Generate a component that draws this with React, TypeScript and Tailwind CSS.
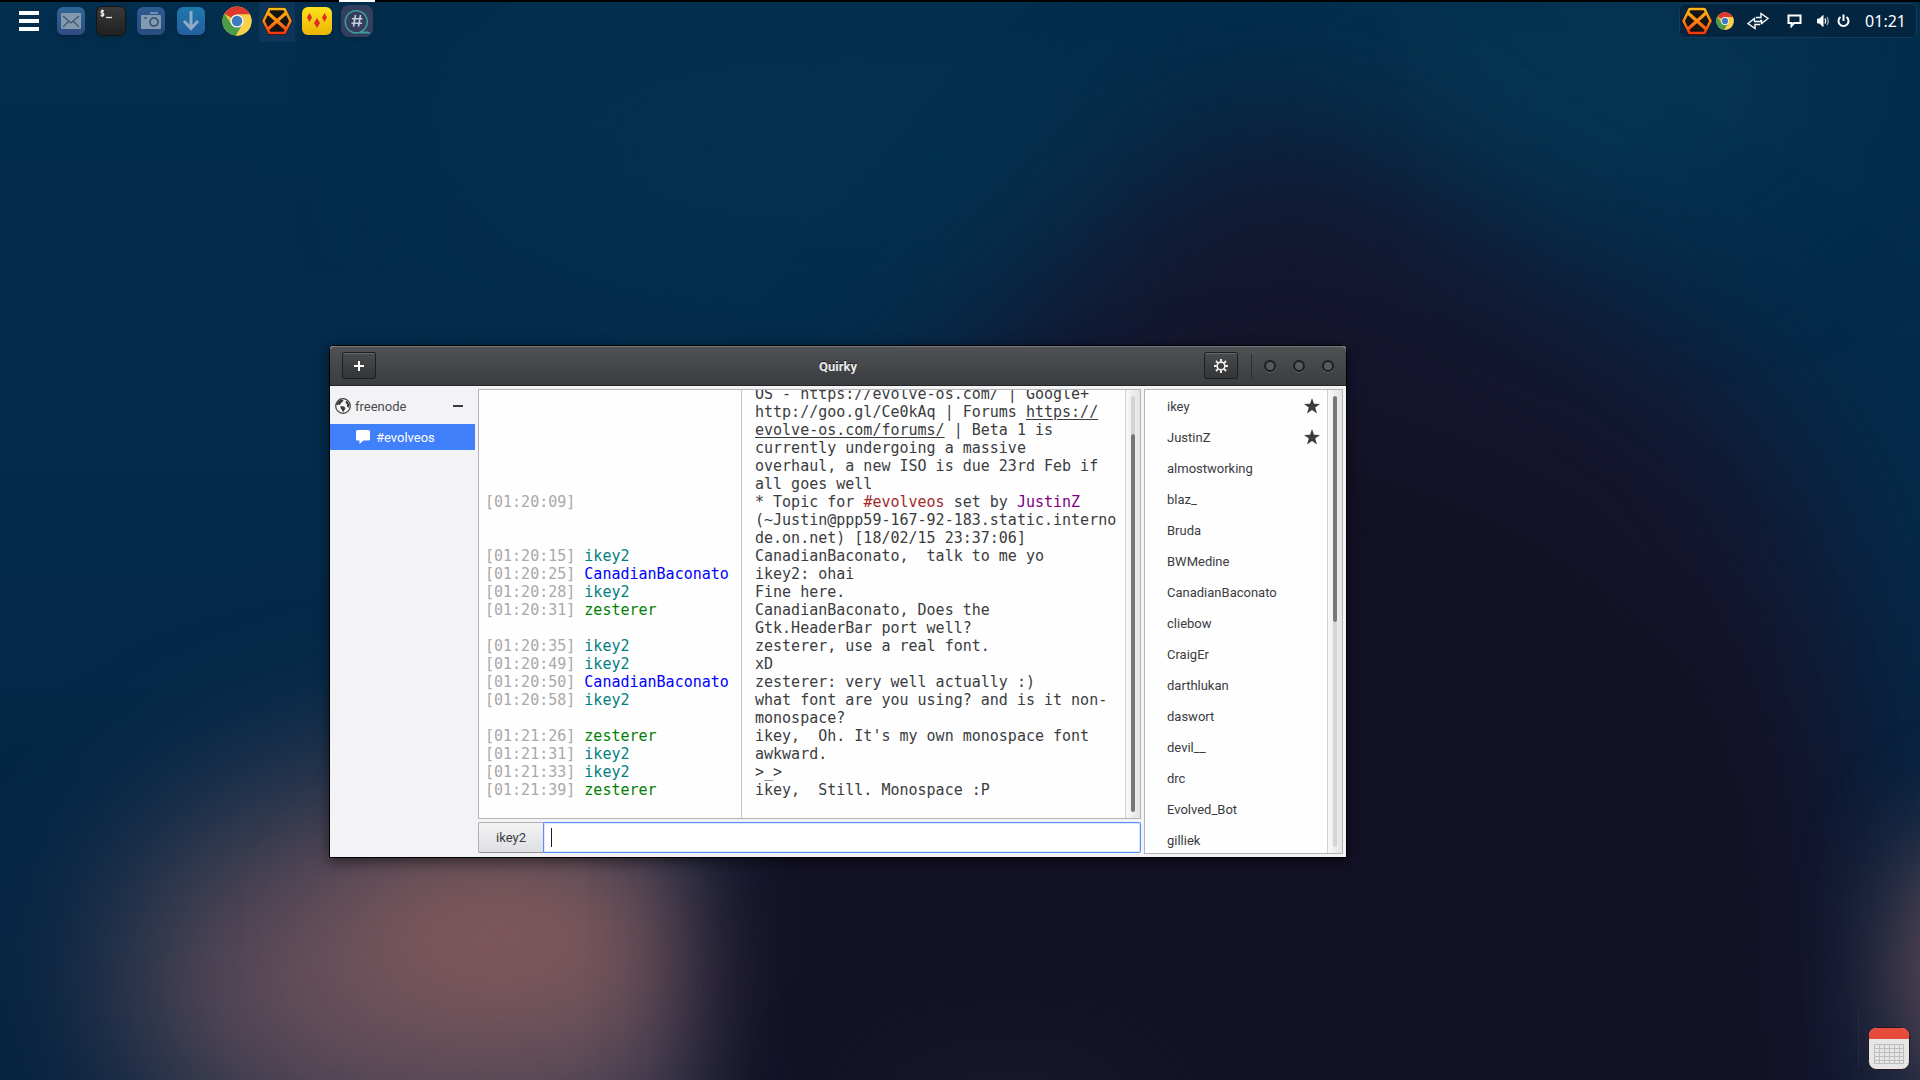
import { Fragment } from 'react';
import type { ReactNode } from 'react';

type Message = {
  time?: string;
  nick?: string;
  color?: string;
  lines: ReactNode[];
};

const messages: Message[] = [
  {
    lines: [
      'OS - https://evolve-os.com/ | Google+',
      <>http://goo.gl/Ce0kAq | Forums <a href="#forums" className="underline underline-offset-2">https://</a></>,
      <><a href="#forums" className="underline underline-offset-2">evolve-os.com/forums/</a> | Beta 1 is</>,
      'currently undergoing a massive',
      'overhaul, a new ISO is due 23rd Feb if',
      'all goes well',
    ],
  },
  {
    time: '01:20:09',
    lines: [
      <>* Topic for <span className="text-[#a52a2a]">#evolveos</span> set by <span className="text-[#800080]">JustinZ</span></>,
      '(~Justin@ppp59-167-92-183.static.interno',
      'de.on.net) [18/02/15 23:37:06]',
    ],
  },
  { time: '01:20:15', nick: 'ikey2', color: 'text-[#008080]', lines: ['CanadianBaconato,  talk to me yo'] },
  { time: '01:20:25', nick: 'CanadianBaconato', color: 'text-[#0000ff]', lines: ['ikey2: ohai'] },
  { time: '01:20:28', nick: 'ikey2', color: 'text-[#008080]', lines: ['Fine here.'] },
  {
    time: '01:20:31',
    nick: 'zesterer',
    color: 'text-[#008000]',
    lines: ['CanadianBaconato, Does the', 'Gtk.HeaderBar port well?'],
  },
  { time: '01:20:35', nick: 'ikey2', color: 'text-[#008080]', lines: ['zesterer, use a real font.'] },
  { time: '01:20:49', nick: 'ikey2', color: 'text-[#008080]', lines: ['xD'] },
  { time: '01:20:50', nick: 'CanadianBaconato', color: 'text-[#0000ff]', lines: ['zesterer: very well actually :)'] },
  {
    time: '01:20:58',
    nick: 'ikey2',
    color: 'text-[#008080]',
    lines: ['what font are you using? and is it non-', 'monospace?'],
  },
  {
    time: '01:21:26',
    nick: 'zesterer',
    color: 'text-[#008000]',
    lines: ["ikey,  Oh. It's my own monospace font"],
  },
  { time: '01:21:31', nick: 'ikey2', color: 'text-[#008080]', lines: ['awkward.'] },
  { time: '01:21:33', nick: 'ikey2', color: 'text-[#008080]', lines: ['>_>'] },
  { time: '01:21:39', nick: 'zesterer', color: 'text-[#008000]', lines: ['ikey,  Still. Monospace :P'] },
];

const users = [
  { name: 'ikey', op: true },
  { name: 'JustinZ', op: true },
  { name: 'almostworking' },
  { name: 'blaz_' },
  { name: 'Bruda' },
  { name: 'BWMedine' },
  { name: 'CanadianBaconato' },
  { name: 'cliebow' },
  { name: 'CraigEr' },
  { name: 'darthlukan' },
  { name: 'daswort' },
  { name: 'devil__' },
  { name: 'drc' },
  { name: 'Evolved_Bot' },
  { name: 'gilliek' },
];

const Wallpaper = () => (
  <svg className="absolute inset-0 w-full h-full" viewBox="0 0 1920 1080" preserveAspectRatio="none" aria-hidden="true">
    <defs>
      <linearGradient id="sky" x1="0" y1="0" x2="0" y2="1">
        <stop offset="0" stopColor="#032e4d" />
        <stop offset="0.5" stopColor="#042a4a" />
        <stop offset="1" stopColor="#05223f" />
      </linearGradient>
      <filter id="soft" x="-60%" y="-100%" width="220%" height="300%" colorInterpolationFilters="sRGB">
        <feGaussianBlur stdDeviation="85" />
      </filter>
      <filter id="mid" x="-60%" y="-80%" width="220%" height="260%" colorInterpolationFilters="sRGB">
        <feGaussianBlur stdDeviation="55" />
      </filter>
    </defs>
    <rect width="1920" height="1080" fill="url(#sky)" />
    <ellipse cx="1560" cy="90" rx="260" ry="110" fill="#053753" filter="url(#soft)" />
    <ellipse cx="850" cy="150" rx="380" ry="120" fill="#04324f" filter="url(#soft)" />
    <ellipse cx="460" cy="980" rx="330" ry="200" fill="#664f5a" filter="url(#soft)" />
    <ellipse cx="500" cy="935" rx="150" ry="75" fill="#80595b" filter="url(#mid)" />
    <path d="M820 1350 C800 1000 760 760 830 600 C900 450 1030 320 1110 225 C1180 130 1340 90 1430 190 C1520 290 1640 290 1740 400 C1840 520 1880 700 1880 1350 Z" fill="#15152d" filter="url(#soft)" />
    <path d="M715 1250 C715 1000 700 800 780 650 C900 480 1180 400 1300 420 C1480 450 1700 560 1760 720 C1810 850 1800 1000 1800 1250 Z" fill="#131125" filter="url(#mid)" />
    <ellipse cx="1010" cy="1110" rx="150" ry="50" fill="#1a1b30" filter="url(#mid)" />
    <ellipse cx="1990" cy="970" rx="85" ry="140" fill="#76545c" filter="url(#mid)" />
  </svg>
);

const Chrome = ({ size }: { size: number }) => (
  <svg width={size} height={size} viewBox="0 0 30 30" aria-hidden="true">
    <circle cx="15" cy="15" r="14.6" fill="#f6c933" />
    <path d="M15 15 L2.4 7.7 A14.6 14.6 0 0 1 27.6 7.7 L28 8.6 L15 8.6 Z" fill="#dc3a31" />
    <path d="M2.4 7.7 A14.6 14.6 0 0 0 14 29.6 L20.6 18.4 L15 15 L9.5 18.3 Z" fill="#4a9c4b" />
    <path d="M28 8.6 A14.6 14.6 0 0 1 14 29.6 L20.6 18.3 L21 12 L15 8.6 Z" fill="#f8d04a" />
    <circle cx="15" cy="15" r="6.6" fill="#f2f2f2" />
    <circle cx="15" cy="15" r="5.2" fill="#3b7ac0" />
  </svg>
);

const Hexchat = () => (
  <svg width="32" height="30" viewBox="0 0 32 30" aria-hidden="true">
    <defs>
      <linearGradient id="hex" gradientUnits="userSpaceOnUse" x1="0" y1="2" x2="0" y2="28">
        <stop offset="0" stopColor="#fcb913" />
        <stop offset="0.5" stopColor="#fb8712" />
        <stop offset="1" stopColor="#f8330c" />
      </linearGradient>
    </defs>
    <path d="M8.500 2 H23.500 L30.500 15 L23.500 28 H8.500 L1.500 15 Z" fill="#141414" stroke="#101010" strokeWidth="2" strokeLinejoin="round" />
    <g fill="none" stroke="url(#hex)" strokeLinejoin="round">
      <path d="M8.500 3 H23.500 L29.500 15 L23.500 27 H8.500 L2.500 15 Z" strokeWidth="2.600" />
      <path d="M7 7 L25 23 M25 7 L7 23" strokeWidth="3.200" />
    </g>
  </svg>
);

const slot = 'w-9 h-10 pb-[2px] flex items-center justify-center';

const Panel = () => (
  <header className="relative flex items-start justify-between border-t-2 border-black">
    <nav className="flex pl-[11px]" aria-label="Launchers">
      <button className={`${slot} mr-[6px]`} aria-label="Menu">
        <svg width="20" height="20" viewBox="0 0 20 20" fill="#fff">
          <path d="M0 0h20v4H0zM0 8h20v4H0zM0 16h20v4H0z" />
        </svg>
      </button>
      <div className="flex gap-1 mr-[10px]">
        <button className={slot} aria-label="Mail">
          <span className="w-7 h-7 rounded-md bg-linear-to-b from-[#2d6796] to-[#304a82] shadow-md flex items-center justify-center">
            <svg width="20" height="16" viewBox="0 0 20 16">
              <rect width="20" height="16" rx="1" fill="#8599ad" />
              <path d="M2 3 L10 10 L18 3 M2 14 L7.500 8.500 M18 14 L12.500 8.500" fill="none" stroke="#395678" strokeWidth="1.300" />
            </svg>
          </span>
        </button>
        <button className={slot} aria-label="Terminal">
          <span className="w-[30px] h-[30px] rounded-md bg-linear-to-b from-[#3a3a3a] to-[#202020] border border-[#151515] shadow-md">
            <svg width="28" height="28" viewBox="0 0 28 28" fill="none" stroke="#e8e8e8">
              <path d="M7 4 H4.500 Q3.500 5.500 5 6 Q7.500 6.500 6.500 8.500 H3.500 M5.300 2.500 V10" strokeWidth="1.300" />
              <path d="M9 10.500 H15" strokeWidth="1.300" />
            </svg>
          </span>
        </button>
        <button className={slot} aria-label="Screenshot">
          <span className="w-7 h-7 rounded-md bg-linear-to-b from-[#2c5b92] to-[#294b80] shadow-md flex items-center justify-center">
            <svg width="20" height="18" viewBox="0 0 20 18">
              <path d="M9 1 H17" stroke="#8da0b5" strokeWidth="1.500" />
              <rect y="3" width="20" height="14" rx="1" fill="#8599ad" />
              <path d="M3 6 H6" stroke="#284c7d" strokeWidth="1.300" />
              <circle cx="13" cy="10" r="4" fill="none" stroke="#284c7d" strokeWidth="1.600" />
            </svg>
          </span>
        </button>
        <button className={slot} aria-label="Downloads">
          <span className="w-7 h-7 rounded-md bg-linear-to-b from-[#1c79ab] to-[#245e9f] shadow-md flex items-center justify-center">
            <svg width="18" height="22" viewBox="0 0 18 22" fill="none" stroke="#8fabc6" strokeWidth="3">
              <path d="M9 1 V19 M2 11 L9 18.500 L16 11" />
            </svg>
          </span>
        </button>
      </div>
      <div className="flex gap-1">
        <button className={slot} aria-label="Chrome"><Chrome size={30} /></button>
        <button className={`${slot} bg-[#0e355a]`} aria-label="HexChat"><Hexchat /></button>
        <button className={slot} aria-label="Games">
          <span className="w-[30px] h-7 rounded-md bg-linear-to-b from-[#fde21c] to-[#edb403] shadow-md flex items-center justify-center">
            <svg width="22" height="16" viewBox="0 0 22 16" fill="#dc3121">
              <path d="M3.500 0 L6 4.500 L3.500 9 L1 4.500Z M18.500 0 L21 4.500 L18.500 9 L16 4.500Z M11 5 L14 10 L11 15 L8 10Z" />
            </svg>
          </span>
        </button>
        <button className={`${slot} relative`} aria-label="Quirky">
          <span className="absolute -top-[2px] inset-x-0 h-[2px] bg-white" />
          <span className="w-8 h-8 rounded-lg bg-[#343f60] shadow-md flex items-center justify-center">
            <svg width="26" height="26" viewBox="0 0 26 26" fill="none">
              <path d="M26 24.800 H13 A11 11 0 1 1 21 20.500 Q19 23 16 24.300 H24" stroke="#3f9997" strokeWidth="1.600" />
              <path d="M11.500 7 L9.500 18.500 M16.500 7 L14.500 18.500 M8 10.800 H18.500 M7.500 15.300 H18" stroke="#c6ccd6" strokeWidth="1.600" />
            </svg>
          </span>
        </button>
      </div>
    </nav>
    <div className="flex items-center h-[35px] mt-px mr-[3px] pl-[1px] pr-[10px] rounded-md border border-[#133b5a] bg-[#04253f] text-white">
      <Hexchat />
      <span className="ml-[3px]"><Chrome size={18} /></span>
      <svg className="ml-[13px]" width="22" height="18" viewBox="0 0 22 18" fill="none" stroke="#fff" strokeWidth="1.400">
        <path d="M9 5.500 H14 V1.500 L21 6.500 L14.500 11.500 V8.500 H13 M13 12.500 H8 V16.500 L1 11.500 L7.500 6.500 V9.500 H14.500" />
      </svg>
      <svg className="ml-[18px]" width="15" height="14" viewBox="0 0 15 14" fill="none" stroke="#fff" strokeWidth="2">
        <path d="M1.500 1.500 H13.500 V9 H7 L4.500 12 V9 H1.500 Z" />
      </svg>
      <svg className="ml-[15px]" width="14" height="14" viewBox="0 0 14 14" fill="none" stroke="#fff">
        <path d="M0.500 5 H2.500 L6 1.500 V12.500 L2.500 9 H0.500Z" fill="#fff" />
        <path d="M8 4.500 Q9.500 7 8 9.500" strokeWidth="1.400" />
        <path d="M10 3 Q12.500 7 10 11" stroke="#a8b5c1" strokeWidth="1.200" />
      </svg>
      <svg className="ml-[6px]" width="13" height="14" viewBox="0 0 13 14" fill="none" stroke="#fff" strokeWidth="2">
        <path d="M3.500 3 A5 5 0 1 0 9.500 3 M6.500 0.500 V7" />
      </svg>
      <time className="ml-[15px] text-base font-['Noto_Sans',sans-serif]">01:21</time>
    </div>
  </header>
);

const headerButton = 'w-[34px] h-[27px] rounded-xs border border-[#1d1e1f] bg-linear-to-b from-[#4a4b4d] to-[#343536] shadow-[inset_0_1px_0_#66676a] flex items-center justify-center';

const TitleBar = () => (
  <div className="relative h-10 flex items-center justify-between px-3 pb-px rounded-t-sm bg-linear-to-b from-[#505155] to-[#3b3c3e] border-t border-t-[#77787b] border-b border-b-[#242526]">
    <button className={headerButton} aria-label="Add server">
      <svg width="10" height="10" viewBox="0 0 10 10" fill="#fff"><path d="M4 0h2v4h4v2H6v4H4V6H0V4h4z" /></svg>
    </button>
    <h1 className="absolute inset-x-0 pt-[2px] text-center text-[13px] font-bold text-[#e8eaec] [text-shadow:0_-1px_0_#1a1a1a] pointer-events-none">Quirky</h1>
    <div className="flex items-center">
      <button className={headerButton} aria-label="Settings">
        <svg width="14" height="14" viewBox="0 0 14 14" fill="none" stroke="#f2f2f2">
          <circle cx="7" cy="7" r="3.900" strokeWidth="1.700" />
          <path d="M7 0V2.500M7 11.500V14M0 7H2.500M11.500 7H14M2 2L3.800 3.800M10.200 10.200L12 12M12 2L10.200 3.800M3.800 10.200L2 12" strokeWidth="1.900" />
        </svg>
      </button>
      <span className="w-px h-6 ml-[13px] mr-3 bg-[#2d2e2f]" />
      <div className="flex gap-[17px]">
        {['Minimize', 'Maximize', 'Close'].map((label) => (
          <button key={label} aria-label={label} className="w-3 h-3 rounded-full border-2 border-[#1c1d1f] bg-[#58595c] shadow-[0_1px_0_#5c5d60]" />
        ))}
      </div>
    </div>
  </div>
);

const Sidebar = () => (
  <aside className="w-[145px] mr-[3px] pt-px">
    <div className="h-8 mb-[2px] flex items-center pl-[5px] pr-3">
      <svg width="16" height="16" viewBox="0 0 16 16" className="mr-1">
        <circle cx="8" cy="8" r="7.300" fill="#f7f7f8" stroke="#3b3c3e" strokeWidth="1.200" />
        <path d="M3 3.500 L6 1.500 L8.500 2 L7.500 4 L6 5 L5 7 L3.500 6.500 L2 7.500 L1.500 6 Z M5.500 8 L9 8.500 L10.500 10 L9.500 12 L8 14.500 L7 12 L5.500 10 Z M11 2.500 L13 4 L14.500 7 L13.500 10 L12 8.500 L12 6 L10.500 5 Z" fill="#3b3c3e" />
      </svg>
      <span className="flex-1 pt-[2px] text-[#4a4b4d]">freenode</span>
      <button aria-label="Collapse freenode" className="w-[10px] h-[2px] bg-[#3b3c3e]" />
    </div>
    <a href="#evolveos" className="h-[26px] flex items-center pl-[26px] bg-[#4080fb] text-white">
      <svg width="14" height="14" viewBox="0 0 14 14" className="mr-[6px]" fill="#fff">
        <path d="M1.500 0 H12.500 Q14 0 14 1.500 V9 Q14 10.500 12.500 10.500 H7.500 L3.500 14 V10.500 H1.500 Q0 10.500 0 9 V1.500 Q0 0 1.500 0Z" />
      </svg>
      <span className="pt-px">#evolveos</span>
    </a>
  </aside>
);

const ChatLog = () => (
  <section className="flex-1 min-h-0 flex border border-[#b3b4b6] bg-[#fefefe]">
    <div className="flex-1 min-w-0 flex flex-col justify-end overflow-hidden font-['DejaVu_Sans_Mono',monospace] text-[15px] leading-[18px] text-[#3b3c3e] whitespace-pre">
      <div className="grid grid-cols-[263px_1fr]">
        {messages.map((message, i) => (
          <Fragment key={i}>
            <div className="pl-[6px] border-r border-[#c4c5c7]">
              {message.time && <span className="text-[#a9a9a9]">[{message.time}] </span>}
              <span className={message.color}>{message.nick}</span>
            </div>
            <div className="pl-[13px]">
              {message.lines.map((line, j) => (
                <div key={j}>{line}</div>
              ))}
            </div>
          </Fragment>
        ))}
        <div className="h-[19px] border-r border-[#c4c5c7]" />
      </div>
    </div>
    <div className="w-[15px] flex flex-col items-center py-[6px] border-l border-[#d0d1d3] bg-linear-to-r from-[#f8f8f9] to-[#e3e3e5]">
      <span className="w-1 h-[38px] rounded-t-full bg-[#d3d4d5]" />
      <span className="w-1 flex-1 rounded-full bg-[#767779]" />
    </div>
  </section>
);

const UserList = () => (
  <aside className="w-[199px] ml-[3px] flex border border-[#b3b4b6] bg-[#fefefe]">
    <ul className="flex-1 pt-px overflow-hidden">
      {users.map((user) => (
        <li key={user.name} className="h-[31px] flex items-center justify-between pl-[22px] pr-[7px] text-[#3b3c3e]">
          {user.name}
          {user.op && (
            <svg width="16" height="18" viewBox="0 0 16 18" fill="#3b3c3e">
              <path d="M8 0 L10 5.700 L16 5.900 L11.200 9.500 L13 15.500 L8 12 L3 15.500 L4.800 9.500 L0 5.900 L6 5.700Z" />
            </svg>
          )}
        </li>
      ))}
    </ul>
    <div className="w-[15px] flex flex-col items-center py-[6px] border-l border-[#d0d1d3] bg-linear-to-r from-[#f8f8f9] to-[#e3e3e5]">
      <span className="w-1 h-1/2 rounded-full bg-[#767779]" />
      <span className="w-1 flex-1 rounded-b-full bg-[#d3d4d5]" />
    </div>
  </aside>
);

export default function App() {
  return (
    <div className="relative h-screen flex flex-col overflow-hidden bg-[#042a4a] font-[Roboto,sans-serif] text-[13px]">
      <Wallpaper />
      <Panel />
      <main className="relative flex-1 min-h-0 flex pt-[303px] pl-[329px] pr-[573px] pb-[222px]">
        <div className="flex-1 flex flex-col border border-black rounded-t-sm bg-[#f3f3f5] shadow-[0_4px_14px_rgba(0,0,0,0.5)]">
          <TitleBar />
          <div className="flex-1 min-h-0 flex pt-[3px] pr-[3px] pb-[3px]">
            <Sidebar />
            <div className="flex-1 min-w-0 flex flex-col gap-[3px] pb-px">
              <ChatLog />
              <form className="flex h-[31px]">
                <button type="button" className="w-[65px] rounded-l-xs border border-r-0 border-[#aeafb1] border-b-[#8e8f91] bg-linear-to-b from-[#f4f4f5] to-[#dedfe1] text-[#3b3c3e]">ikey2</button>
                <div className="relative flex-1 flex">
                  <input autoFocus aria-label="Message" className="flex-1 min-w-0 px-[7px] rounded-r-xs border border-[#5a90f5] bg-white shadow-[inset_0_0_0_1px_#dbe7fd] outline-none text-[15px] caret-transparent" />
                  <span className="absolute left-2 inset-y-[6px] w-px bg-[#1c1d1f]" />
                </div>
              </form>
            </div>
            <UserList />
          </div>
        </div>
      </main>
      <button aria-label="Calendar" className="absolute right-[10px] bottom-[10px]">
        <svg width="42" height="43" viewBox="0 0 42 43">
          <rect x="0.500" y="0.500" width="41" height="42" rx="8" fill="#e6e6e6" stroke="#25171d" />
          <path d="M1 12 V8.500 Q1 1 8.500 1 H33.500 Q41 1 41 8.500 V12Z" fill="#e64b3c" />
          <path d="M6.500 17V37M11.500 17V37M16.500 17V37M21.500 17V37M26.500 17V37M31.500 17V37M35.500 17V37M6 17.500H36M6 21.500H36M6 25.500H36M6 29.500H36M6 33.500H36M6 36.500H36" stroke="#bdbdbd" />
        </svg>
      </button>
      <span className="absolute right-[61px] bottom-3 w-px h-14 bg-white/5" />
    </div>
  );
}
